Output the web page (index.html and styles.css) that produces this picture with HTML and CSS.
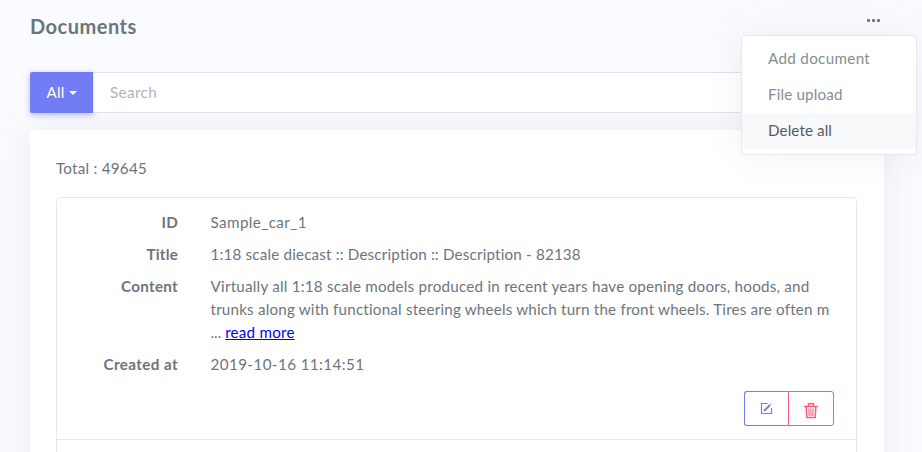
FILE: index.html
```html
<!DOCTYPE html>
<html lang="en">
<head>
<meta charset="utf-8">
<title>Documents</title>
<link rel="stylesheet" href="styles.css">
</head>
<body>
<main class="page">
  <header class="header">
    <h1 class="title">Documents</h1>
    <div class="menu-anchor">
      <button class="more" aria-label="More"><i></i><i></i><i></i></button>
      <nav class="menu">
        <a class="menu-item add">Add document</a>
        <a class="menu-item upload">File upload</a>
        <a class="menu-item remove active">Delete all</a>
      </nav>
    </div>
  </header>
  <div class="search">
    <button class="filter"><span>All</span><i class="caret"></i></button>
    <input class="field" type="text" placeholder="Search">
  </div>
  <section class="card">
    <p class="total">Total : 49645</p>
    <ul class="list">
      <li class="doc">
        <dl class="props">
          <dt class="k-id">ID</dt><dd class="v-id">Sample_car_1</dd>
          <dt class="k-title">Title</dt><dd class="v-title">1:18 scale diecast :: Description :: Description - 82138</dd>
          <dt class="k-content">Content</dt><dd><span class="line-a">Virtually all 1:18 scale models produced in recent years have opening doors, hoods, and</span><br><span class="line-b">trunks along with functional steering wheels which turn the front wheels. Tires are often m</span><br><span class="dots">...</span> <a class="read" href="#">read more</a></dd>
          <dt class="k-created">Created at</dt><dd class="v-created">2019-10-16 11:14:51</dd>
        </dl>
        <div class="actions">
          <button class="btn edit" aria-label="Edit"><svg width="13" height="13" viewBox="0 0 13 13" fill="none" stroke="currentColor"><path d="M7.5 1.5H1.5V11.5H11.5V6" stroke-width="1.2"/><path d="M5 8L10 3" stroke-width="2"/><path d="M4 9L4.5 7.2L5.8 8.5ZM10.3 1.6L11.5 2.8"/></svg></button>
          <button class="btn trash" aria-label="Delete"><svg width="14" height="16" viewBox="0 0 14 16" fill="none" stroke="currentColor"><path d="M0 3.5H14M4.5 3V.8H9.5V3M2.2 4L2.8 14.5H11.2L11.8 4" stroke-width="1.5"/><path d="M4.9 5.5L5.2 13M7 5.5V13M9.1 5.5L8.8 13" stroke-width="1.1"/></svg></button>
        </div>
      </li>
      <li class="doc next"></li>
    </ul>
  </section>
</main>
</body>
</html>
```
FILE: styles.css
```css
* { box-sizing: border-box; }
body { margin: 0; background: #fafbfe; color: #6c757d; font: 15.2px/23px Lato, "Open Sans", sans-serif; font-variant-ligatures: none; }
button, input { font: inherit; }
button { border: 0; padding: 0; background: none; color: inherit; }
.page { height: 452px; overflow: hidden; padding: 0 38px 0 30px; }
.header { display: flex; justify-content: space-between; height: 72px; padding-top: 15px; }
.title { margin: 0; font-size: 20px; line-height: 23px; font-weight: 700; letter-spacing: .5px; }
.menu-anchor { position: relative; width: 17px; height: 12px; }
.more { display: flex; gap: 2px; padding-top: 4px; }
.more i { width: 3px; height: 3px; border-radius: 1px; background: #6c757d; }
.menu { position: absolute; z-index: 2; top: 20px; right: -33px; width: 176px; height: 120px; padding: 5px 0; border: 1px solid #e3eaef; border-radius: 4px; background: #fff; box-shadow: 0 0 35px rgba(154,161,171,.15); }
.menu-item { display: block; height: 36px; padding: 0 26px; line-height: 35px; color: #858d94; }
.add { letter-spacing: .33px; }
.upload { letter-spacing: .15px; }
.remove { letter-spacing: .1px; }
.menu .active { height: 36px; background: #f8f9fb; color: #555a60; }
.search { display: flex; height: 41px; }
.filter { display: flex; align-items: center; justify-content: center; gap: 4px; width: 63px; border-radius: 2px 0 0 2px; background: #727cf5; color: #fff; box-shadow: 0 2px 6px rgba(114,124,245,.5); letter-spacing: .2px; }
.caret { border: 4px solid transparent; border-top-color: #fff; border-bottom: 0; }
.field { flex: 1; min-width: 0; padding: 0 16px; border: 1px solid #dee2e6; border-left-color: #e5e5fa; outline: 0; background: #fff; }
.field::placeholder { color: #adb5bd; opacity: 1; letter-spacing: .4px; }
.card { height: 400px; margin-top: 17px; padding: 27px 27px 0 26px; border-radius: 4px; background: #fff; box-shadow: 0 0 35px rgba(154,161,171,.15); }
.total { margin: 0 0 17px; letter-spacing: .25px; }
.list { margin: 0; padding: 0; list-style: none; border: 1px solid #e3eaef; border-radius: 4px; }
.doc { height: 242px; padding: 13px 22px 0 0; border-bottom: 1px solid #e3eaef; }
.next { height: 40px; border: 0; }
.props { display: grid; grid-template-columns: 121px 1fr; gap: 9px 32.5px; margin: 0; white-space: nowrap; }
dt { text-align: right; font-weight: 700; }
dd { margin: 0; }
.k-id, .k-title { letter-spacing: .2px; }
.k-content { letter-spacing: .3px; }
.k-created { letter-spacing: .4px; }
.v-id { letter-spacing: .42px; }
.v-title { letter-spacing: .18px; }
.v-created { letter-spacing: .41px; }
.line-a { letter-spacing: .23px; }
.line-b { letter-spacing: .19px; }
.read { color: #00f; text-decoration: underline; letter-spacing: .22px; }
.actions { display: flex; justify-content: flex-end; margin-top: 15px; }
.btn { display: flex; align-items: center; justify-content: center; height: 35px; border: 1px solid #727cf5; }
.edit { width: 44px; border-right: 0; border-radius: 3px 0 0 3px; color: #727cf5; }
.trash { width: 46px; padding-top: 4px; border-color: #fa5c7c; border-radius: 0 3px 3px 0; color: #fa5c7c; }
```
